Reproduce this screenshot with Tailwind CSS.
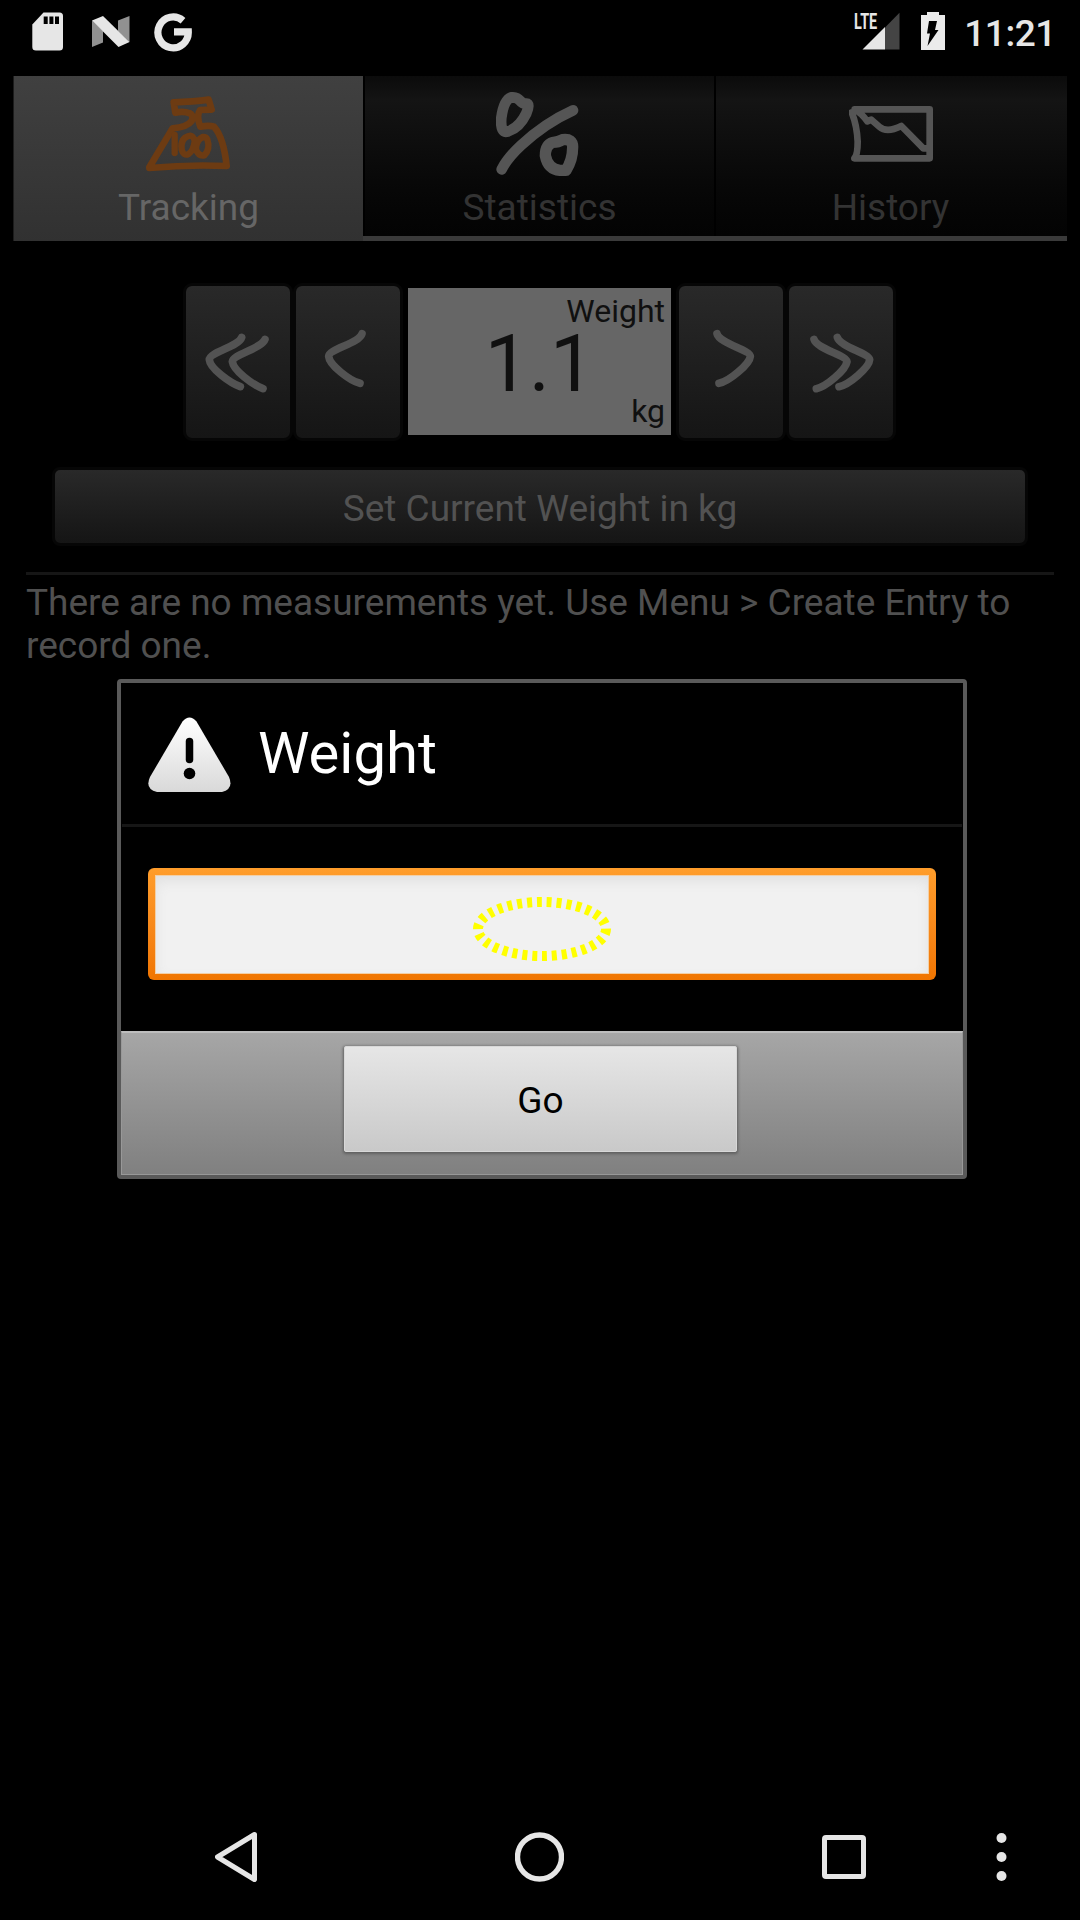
<!DOCTYPE html>
<html lang="en">
<head>
<meta charset="utf-8">
<title>Weight</title>
<script src="https://cdn.jsdelivr.net/npm/@tailwindcss/browser@4"></script>
</head>
<body class="bg-black">
<div class="relative flex h-[1920px] w-[1080px] flex-col overflow-hidden bg-black font-['Roboto',sans-serif] text-[37px] leading-[43px]">

  <!-- Status bar -->
  <header class="flex h-[76px] shrink-0 items-start justify-between pr-[24px] pl-8">
    <div class="flex">
      <svg class="mt-3" width="160" height="40" viewBox="32 12 160 40">
        <path fill="#e6e6e6" d="M43.500 12.500H59.500Q63 12.500 63 16V47Q63 50.500 59.500 50.500H36Q32.300 50.500 32.300 47V24.500Z"/>
        <path fill="#000" d="M43.700 16.500h4v7.500h-4zM49.400 16.500h4v7.500h-4zM55 16.500h4v7.500h-4z"/>
        <path fill="#919191" d="M92 20.500L103 31V42.500L92 47ZM118 20.500L129.500 16V42L118 31Z"/>
        <path fill="#e6e6e6" d="M92 20.500L103 16L129.500 42L118.500 47Z"/>
        <path fill="none" stroke="#e6e6e6" stroke-width="7.200" d="M183 20.700A15.200 15.400 0 1 0 188.300 31.800H174"/>
      </svg>
    </div>
    <div class="flex">
      <div class="relative mt-3 h-[38px] w-[46px]">
        <svg width="46" height="38" viewBox="855 12 46 38">
          <path fill="#444" d="M886 27.500L900.500 12.800V49.500H886Z"/>
          <path fill="#e6e6e6" d="M863.500 49.500L886 27V49.500Z"/>
        </svg>
        <span class="absolute top-[1px] left-0 origin-left scale-x-[0.67] text-[21.5px] leading-[17px] font-bold text-[#e6e6e6]">LTE</span>
      </div>
      <svg class="mt-3 ml-[21px]" width="24" height="38" viewBox="922 12 24 38">
        <path fill="#ebebeb" d="M928 12h12v3h6v35h-24v-35h6z"/>
        <path fill="#000" d="M930 21h8l-2 9h3.500L928.500 46l2.500-12.500h-3z"/>
      </svg>
      <span class="mt-[12px] ml-[19px] font-medium tracking-[-0.4px] text-[#e6e6e6]">11:21</span>
    </div>
  </header>

  <!-- Tabs -->
  <nav class="relative mx-[13px] flex h-[165px] shrink-0">
    <div class="flex w-[350px] flex-col items-center border-l border-[#1c1c1c] bg-linear-to-b from-[#404040] to-[#313131] pt-4 text-[#666]">
      <svg class="mr-[2px]" width="84" height="84" viewBox="438 66 252 252" fill="none" stroke="#6d3b12" stroke-linecap="round" stroke-linejoin="round">
        <path stroke-width="20" d="M448 292L518 175Q562 171 575 153Q582 137 570 130Q550 122 526 128L521 97Q580 95 626 89L635 119L600 120Q588 138 601 170Q628 165 642 170Q671 202 680 288Q565 283 448 294Z"/>
        <path stroke-width="19" d="M524 195V249M566 198Q540 206 545 239Q550 258 565 253Q581 241 584 213Q580 194 566 198ZM608 201Q588 210 588 238Q596 260 613 256Q632 238 622 208Q618 200 608 201Z"/>
      </svg>
      <span class="mt-2.5">Tracking</span>
    </div>
    <div class="mb-[5px] flex flex-1 flex-col items-center border-l-2 border-black bg-linear-to-b from-[#0b0b0b] via-[#141414] via-15% to-[#030303] pt-4 text-[#333]">
      <svg class="mr-[3px]" width="84" height="84" viewBox="441 66 252 252" fill="none" stroke="#555" stroke-linecap="round" stroke-linejoin="round">
        <path stroke-width="32" d="M486 82Q464 91 457 143Q453 192 478 184Q512 172 532 130Q544 100 532 101Q521 102 513 92Q504 81 486 82ZM458 298Q475 264 516 226Q588 159 672 121"/>
        <path stroke-width="34" d="M612 217Q589 224 589 257Q597 298 633 301H651Q671 270 671 231Q671 205 641 209Q628 217 612 217Z"/>
      </svg>
      <span class="mt-2.5">Statistics</span>
    </div>
    <div class="mb-[5px] flex w-[353px] flex-col items-center border-l-2 border-black bg-linear-to-b from-[#0b0b0b] via-[#141414] via-15% to-[#030303] pt-4 pr-[2px] text-[#333]">
      <svg width="84" height="84" viewBox="447 66 252 252" fill="none" stroke="#555" stroke-width="20" stroke-linecap="round" stroke-linejoin="round">
        <path d="M464 118H689V265H463Q473 255 473 215Q471 166 455 127M464 119Q485 129 502 154L514 149L538 170Q560 190 604 168L670 235H682"/>
      </svg>
      <span class="mt-2.5">History</span>
    </div>
    <div class="absolute right-0 bottom-0 h-[5px] w-[704px] bg-[#3a3a3a]"></div>
  </nav>

  <!-- Weight stepper -->
  <section class="mt-[42px] flex h-[158px] shrink-0 items-start pl-[183px]">
    <button class="h-[158px] w-[110px] rounded-[9px] border-3 border-[#060606] bg-linear-to-b from-[#292929] to-[#151515]">
      <svg width="104" height="152" viewBox="48 48 312 456" fill="none" stroke="#535353" stroke-width="23" stroke-linecap="round" stroke-linejoin="round"><path d="M215 202C207 229 118 247 118 269C120 296 182 339 211 350M285 208C276 235 188 254 187 275C190 301 247 344 279 356"/></svg>
    </button>
    <button class="h-[158px] w-[110px] rounded-[9px] border-3 border-[#060606] bg-linear-to-b from-[#292929] to-[#151515]">
      <svg width="104" height="152" viewBox="378 48 312 456" fill="none" stroke="#535353" stroke-width="23" stroke-linecap="round" stroke-linejoin="round"><path d="M576 191C568 220 476 237 476 259C478 285 539 332 570 340"/></svg>
    </button>
    <div class="mx-[5px] mt-[5px] flex h-[147px] w-[263px] flex-col bg-[#666] px-[6px] text-right text-[32px] text-[#101010]">
      <span class="mt-[6px] h-[34px] leading-[34px]">Weight</span>
      <span class="flex h-[68px] items-center justify-center pt-[4px] text-[79px] leading-[68px]">1.1</span>
      <span class="h-[34px] leading-[31px]">kg</span>
    </div>
    <button class="h-[158px] w-[110px] rounded-[9px] border-3 border-[#060606] bg-linear-to-b from-[#292929] to-[#151515]">
      <svg width="104" height="152" viewBox="417 48 312 456" fill="none" stroke="#535353" stroke-width="23" stroke-linecap="round" stroke-linejoin="round"><path d="M531 191C539 221 631 240 631 259C629 282 568 334 537 340"/></svg>
    </button>
    <button class="h-[158px] w-[110px] rounded-[9px] border-3 border-[#060606] bg-linear-to-b from-[#292929] to-[#151515]">
      <svg width="104" height="152" viewBox="747 48 312 456" fill="none" stroke="#535353" stroke-width="23" stroke-linecap="round" stroke-linejoin="round"><path d="M892 202C901 231 988 250 989 269C988 292 927 344 897 350M822 208C830 237 920 256 921 275C917 301 858 350 829 356"/></svg>
    </button>
  </section>

  <button class="mx-[52px] mt-[26px] h-[79px] shrink-0 rounded-[8px] border-3 border-[#060606] bg-linear-to-b from-[#292929] to-[#151515] pt-[3px] text-[#525252]">Set Current Weight in kg</button>

  <div class="mx-[26px] mt-[26px] h-[3px] shrink-0 bg-[#161616]"></div>
  <p class="mx-[26px] mt-[6px] text-[#505050]">There are no measurements yet. Use Menu &gt; Create Entry to record one.</p>

  <!-- Navigation bar -->
  <footer class="mt-auto flex h-[126px] shrink-0 items-center pl-[215px]">
    <svg width="42" height="50" viewBox="215 1832 42 50"><path fill="none" stroke="#e6e6e6" stroke-width="5" stroke-linejoin="round" d="M254.500 1834.500L217.500 1857L254.500 1879.500Z"/></svg>
    <svg class="ml-[258px]" width="49" height="50" viewBox="0 0 49 50"><circle cx="24.500" cy="25" r="22" fill="none" stroke="#e6e6e6" stroke-width="5.400"/></svg>
    <svg class="ml-[258px]" width="44" height="44" viewBox="0 0 44 44"><rect x="2.500" y="2.500" width="39" height="39" rx="1.500" fill="none" stroke="#e6e6e6" stroke-width="5"/></svg>
    <svg class="ml-[130px]" width="11" height="50" viewBox="0 0 11 50" fill="#e6e6e6"><circle cx="5.500" cy="6" r="5"/><circle cx="5.500" cy="25" r="5"/><circle cx="5.500" cy="44" r="5"/></svg>
  </footer>

  <!-- Dialog -->
  <div class="absolute top-[679px] left-[117px] flex h-[500px] w-[850px] flex-col rounded-[4px] border-4 border-[#5a5a5a] bg-black">
    <div class="mx-[1px] flex h-[144px] shrink-0 items-start border-b-3 border-[#161616] pl-[26px]">
      <svg class="mt-[34px]" width="83" height="76" viewBox="0 0 83 76">
        <defs><linearGradient id="warn" x1="0" y1="0" x2="0" y2="1"><stop offset="0" stop-color="#fff"/><stop offset="1" stop-color="#d9d9d9"/></linearGradient></defs>
        <path fill="url(#warn)" d="M34.500 4.500Q41.500-3.500 48.500 4.500L81 60Q86 72 74 75H9Q-3.500 72 2 60Z"/>
        <path stroke="#000" stroke-width="7.500" stroke-linecap="round" d="M41.500 24.500V42.500"/>
        <circle cx="41.500" cy="56.500" r="5.800"/>
      </svg>
      <h1 class="mt-[36px] ml-[27px] text-[58px] leading-[68px] text-white">Weight</h1>
    </div>
    <div class="flex h-[204px] shrink-0 justify-center pt-[41px]">
      <div class="h-[112px] w-[788px] rounded-[6px] bg-linear-to-b from-[#ff9d2b] to-[#f07500] p-[7px] pb-[6px]">
        <div class="flex h-full items-center justify-center border border-[#f3cfa5] bg-[#f1f1f1] shadow-[inset_0_6px_14px_-2px_#dedede]">
          <svg class="mt-[9px] mr-px" width="140" height="66" viewBox="0 0 140 66"><ellipse cx="70" cy="33" rx="64" ry="27" fill="none" stroke="#ff0" stroke-width="10" stroke-dasharray="5 4.900"/></svg>
        </div>
      </div>
    </div>
    <div class="flex flex-1 justify-center border border-t-2 border-[#989898] border-t-[#bdbdbd] bg-linear-to-b from-[#a6a6a6] to-[#808080] pt-[13px] pr-[3px]">
      <button class="h-[106px] w-[393px] rounded-[2px] border border-[#d8d8d8] bg-linear-to-b from-[#e6e6e6] to-[#c9c9c9] pt-[2px] text-black shadow-[0_1px_3px_1px_#606060]">Go</button>
    </div>
  </div>
</div>
</body>
</html>
